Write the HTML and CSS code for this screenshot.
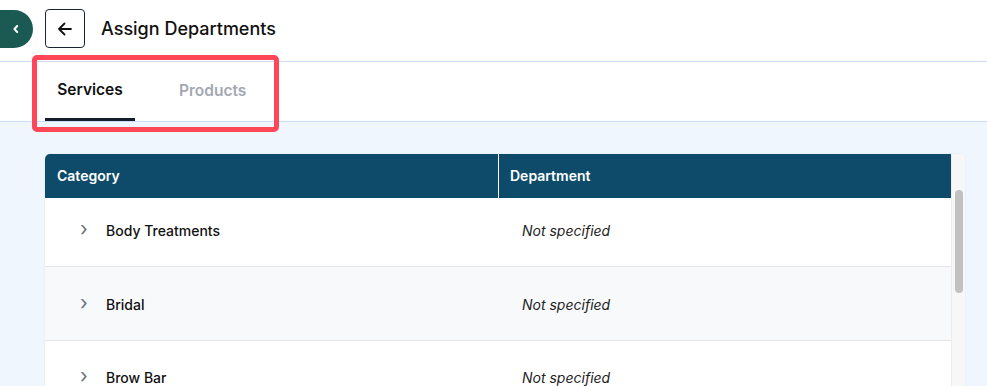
FILE: index.html
```html
<!DOCTYPE html>
<html>
<head>
<meta charset="utf-8">
<link rel="stylesheet" href="styles.css">
</head>
<body>
<div class="page">
  <header class="topbar">
    <button class="pill" aria-label="Collapse">
      <svg width="10" height="10" viewBox="0 0 10 10"><path d="M6.2 2 L3.4 5 L6.2 8" fill="none" stroke="#fff" stroke-width="2" stroke-linecap="round" stroke-linejoin="round"/></svg>
    </button>
    <button class="back" aria-label="Back">
      <svg width="18" height="18" viewBox="0 0 18 18"><path d="M15 9 H3 M8.5 3.5 L3 9 L8.5 14.5" fill="none" stroke="#111" stroke-width="1.8" stroke-linecap="round" stroke-linejoin="round"/></svg>
    </button>
    <h1 class="title">Assign Departments</h1>
  </header>
  <nav class="tabs">
    <div class="tab active">Services</div>
    <div class="tab">Products</div>
    <div class="highlight"></div>
  </nav>
  <main class="content">
    <div class="card">
      <div class="table">
        <div class="thead">
          <div class="th col1">Category</div>
          <div class="th col2">Department</div>
        </div>
        <div class="row first">
          <div class="cell col1"><span class="chev">&#x203A;</span><span class="name">Body Treatments</span></div>
          <div class="cell col2"><em>Not specified</em></div>
        </div>
        <div class="row alt">
          <div class="cell col1"><span class="chev">&#x203A;</span><span class="name">Bridal</span></div>
          <div class="cell col2"><em>Not specified</em></div>
        </div>
        <div class="row">
          <div class="cell col1"><span class="chev">&#x203A;</span><span class="name">Brow Bar</span></div>
          <div class="cell col2"><em>Not specified</em></div>
        </div>
      </div>
      <div class="scrollbar"><div class="thumb"></div></div>
    </div>
  </main>
</div>
</body>
</html>
```
FILE: styles.css
```css
* { box-sizing: border-box; }
html, body { margin: 0; padding: 0; }
body {
  font-family: Inter, "Noto Sans", "Liberation Sans", sans-serif;
  background: #eff6fd;
  color: #111;
  width: 987px;
  height: 386px;
  overflow: hidden;
}
.page { display: flex; flex-direction: column; }
.topbar {
  height: 62px;
  background: #fff;
  border-bottom: 1px solid #c8ddf3;
  display: flex;
  align-items: center;
}
.pill {
  width: 33px;
  height: 38px;
  margin-top: -4px;
  border: none;
  background: #1a5a52;
  border-radius: 0 19px 19px 0;
  display: flex;
  align-items: center;
  justify-content: center;
  padding: 0 2px 0 0;
}
.back {
  width: 40px;
  height: 39px;
  margin-left: 12px;
  margin-top: -4px;
  border: 1px solid #1c2333;
  border-radius: 4px;
  background: #fff;
  display: flex;
  align-items: center;
  justify-content: center;
  padding: 0;
}
.title {
  margin: -4px 0 0 16px;
  font-size: 18px;
  font-weight: 500;
  color: #111;
  letter-spacing: 0;
}
.tabs {
  position: relative;
  height: 60px;
  background: #fff;
  border-bottom: 1px solid #c8ddf3;
  display: flex;
  padding-left: 45px;
}
.tab {
  font-size: 15.5px;
  font-weight: 600;
  color: #a3a8b1;
  display: flex;
  align-items: center;
  justify-content: center;
  height: 57px;
  padding-bottom: 1px;
}
.tab.active {
  color: #111;
  width: 90px;
  border-bottom: 3px solid #151c2b;
  height: 59px;
  margin-bottom: -1px;
}
.tab:not(.active) { margin-left: 44px; }
.highlight {
  position: absolute;
  left: 32px;
  top: -7px;
  width: 247px;
  height: 77px;
  border: 5px solid #ff4757;
  border-radius: 5px;
  pointer-events: none;
}
.content {
  padding: 32px 22px 0 45px;
}
.card {
  display: flex;
  background: #fff;
  border-radius: 5px 5px 0 0;
  overflow: hidden;
  box-shadow: 0 0 2px rgba(0, 40, 80, 0.08);
  height: 240px;
}
.table { width: 906px; }
.thead {
  display: flex;
  height: 44px;
  background: #0e4b6b;
  color: #fff;
}
.th {
  font-size: 14px;
  font-weight: 600;
  display: flex;
  align-items: center;
  padding-left: 12px;
  padding-bottom: 2px;
}
.col1 { width: 453px; }
.col2 { flex: 1; }
.th.col2 { border-left: 1px solid #fff; padding-left: 11px; }
.row {
  display: flex;
  height: 74px;
  border-bottom: 1px solid #e4e6ea;
  background: #fff;
}
.row.first { height: 69px; padding-bottom: 4px; }
.row.alt { background: #f8f9fb; padding-top: 2px; }
.cell {
  display: flex;
  align-items: center;
  font-size: 14px;
}
.cell.col1 { padding-left: 35px; }
.cell.col2 { padding-left: 24px; }
.chev {
  color: #6b7280;
  font-size: 20px;
  width: 26px;
  line-height: 1;
  margin-top: -3px;
}
.name { font-weight: 500; color: #111; }
em { font-style: italic; color: #222; }
.scrollbar {
  width: 14px;
  background: #f7f7f7;
  border-left: 1px solid #ececec;
  padding: 36px 2px 0 3px;
}
.thumb {
  height: 103px;
  background: #c1c1c1;
  border-radius: 4px;
}
```
